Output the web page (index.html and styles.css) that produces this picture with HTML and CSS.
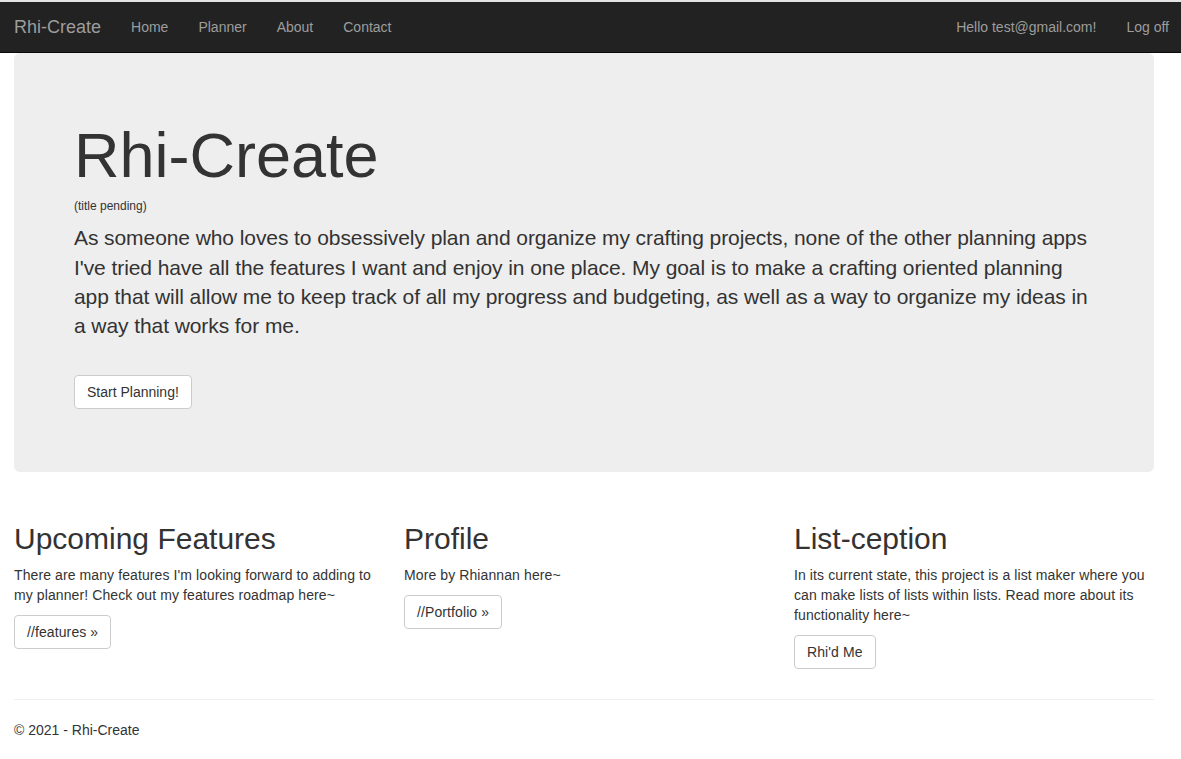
FILE: index.html
```html
<!DOCTYPE html>
<html>
<head>
<meta charset="utf-8">
<title>Home Page - Rhi-Create</title>
<link rel="stylesheet" href="styles.css">
</head>
<body>
<div class="navbar">
  <div class="container nav-inner">
    <a class="brand" href="#">Rhi-Create</a>
    <ul class="nav">
      <li><a href="#">Home</a></li>
      <li><a href="#">Planner</a></li>
      <li><a href="#">About</a></li>
      <li><a href="#">Contact</a></li>
    </ul>
    <ul class="nav nav-right">
      <li><a href="#">Hello test@gmail.com!</a></li>
      <li><a href="#">Log off</a></li>
    </ul>
  </div>
</div>
<div class="container body-content">
  <div class="jumbotron">
    <h1>Rhi-Create</h1>
    <div class="subtitle">(title pending)</div>
    <p class="lead">As someone who loves to obsessively plan and organize my crafting projects, none of the other planning apps I've tried have all the features I want and enjoy in one place. My goal is to make a crafting oriented planning app that will allow me to keep track of all my progress and budgeting, as well as a way to organize my ideas in a way that works for me.</p>
    <p class="jumbo-action"><a class="btn" href="#">Start Planning!</a></p>
  </div>
  <div class="row">
    <div class="col">
      <h2>Upcoming Features</h2>
      <p>There are many features I'm looking forward to adding to my planner! Check out my features roadmap here~</p>
      <p><a class="btn" href="#">//features &raquo;</a></p>
    </div>
    <div class="col">
      <h2>Profile</h2>
      <p>More by Rhiannan here~</p>
      <p><a class="btn" href="#">//Portfolio &raquo;</a></p>
    </div>
    <div class="col">
      <h2>List-ception</h2>
      <p>In its current state, this project is a list maker where you can make lists of lists within lists. Read more about its functionality here~</p>
      <p><a class="btn" href="#">Rhi'd Me</a></p>
    </div>
  </div>
  <hr class="sep">
  <footer class="footer">
    <p>&copy; 2021 - Rhi-Create</p>
  </footer>
</div>
</body>
</html>
```
FILE: styles.css
```css
* { box-sizing: border-box; }
html, body { margin: 0; padding: 0; }
body {
  font-family: "Liberation Sans", Arial, Helvetica, sans-serif;
  font-size: 14px;
  line-height: 20px;
  color: #333;
  background: #fff;
  border-top: 2px solid #e4e4e4;
}
a { text-decoration: none; }
.container {
  width: 1140px;
  margin: 0 14px;
}
.navbar {
  background: #222;
  border-bottom: 1px solid #080808;
  height: 51px;
}
.nav-inner {
  display: flex;
  align-items: stretch;
  height: 50px;
}
.brand {
  font-size: 18px;
  line-height: 20px;
  padding: 15px 15px 15px 0;
  color: #9d9d9d;
}
.nav {
  list-style: none;
  margin: 0;
  padding: 0;
  display: flex;
}
.nav a {
  display: block;
  padding: 15px;
  line-height: 20px;
  color: #9d9d9d;
}
.nav-right {
  margin-left: auto;
  margin-right: -30px;
}
.jumbotron {
  background: #eee;
  border-radius: 6px;
  padding: 48px 60px;
  margin-bottom: 30px;
}
.jumbotron h1 {
  font-size: 63px;
  font-weight: 500;
  line-height: 1.1;
  margin: 20px 0 10px;
}
.subtitle {
  font-size: 12px;
  line-height: 13px;
  margin-bottom: 10px;
}
.lead {
  font-size: 21px;
  line-height: 1.4;
  font-weight: 200;
  letter-spacing: -0.08px;
  margin: 0 0 15px;
}
.jumbo-action {
  margin: 34px 0 15px;
  line-height: 34px;
  height: 34px;
}
.btn {
  display: inline-block;
  padding: 6px 12px;
  font-size: 14px;
  line-height: 20px;
  color: #333;
  background: #fff;
  border: 1px solid #ccc;
  border-radius: 4px;
  vertical-align: top;
}
.row {
  display: grid;
  grid-template-columns: repeat(3, 360px);
  column-gap: 30px;
}
.col h2 {
  font-size: 30px;
  font-weight: 500;
  line-height: 1.1;
  margin: 20px 0 10px;
}
.col p {
  margin: 0 0 10px;
  letter-spacing: 0.1px;
}
.sep {
  border: 0;
  border-top: 1px solid #eee;
  margin: 20px 0;
  height: 0;
}
.footer p {
  margin: 0 0 10px;
}
```
